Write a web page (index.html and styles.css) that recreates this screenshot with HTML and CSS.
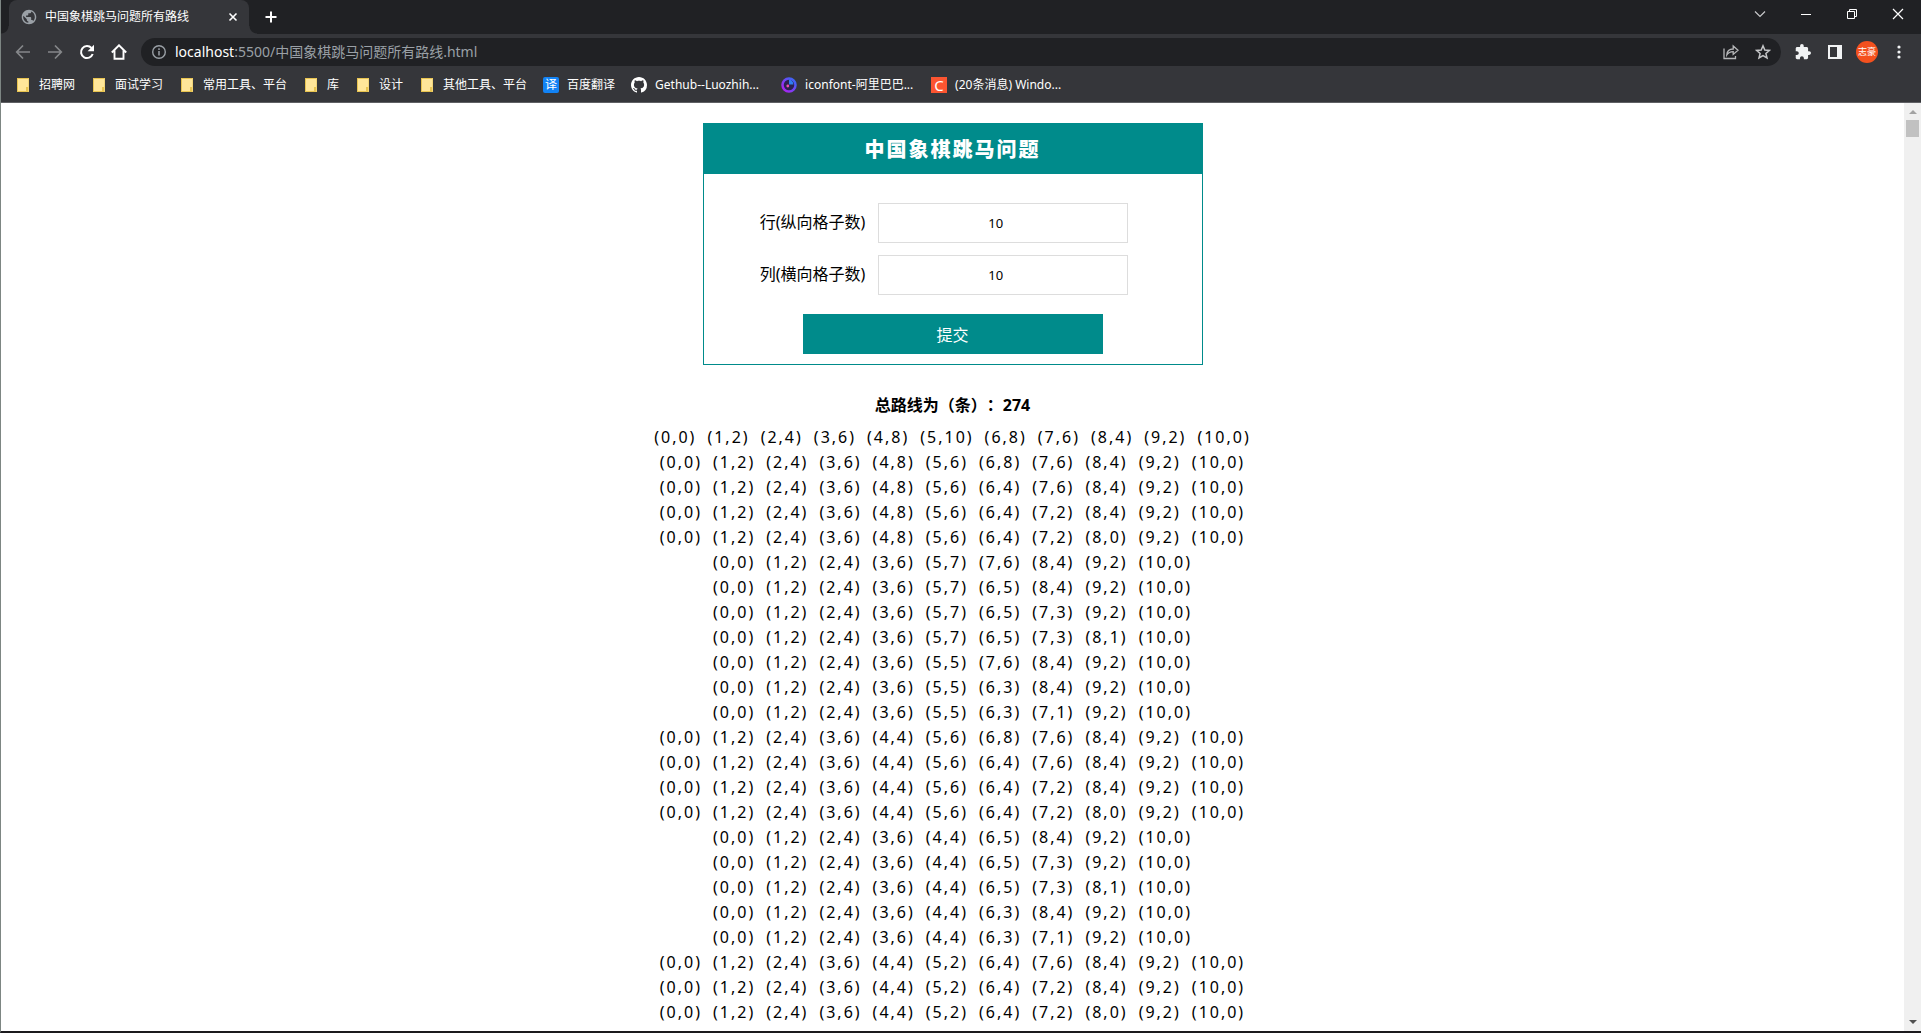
FILE: index.html
```html
<!DOCTYPE html>
<html lang="zh-CN">
<head>
<meta charset="utf-8">
<title>中国象棋跳马问题所有路线</title>
<link rel="stylesheet" href="styles.css">
</head>
<body>
<div class="window">
  <header class="chrome">
    <div class="tab-strip">
      <div class="tab">
        <svg width="16" height="16" viewBox="1 1 22 22"><path fill="#9aa0a6" d="M12 2C6.480 2 2 6.480 2 12s4.480 10 10 10 10-4.480 10-10S17.520 2 12 2zm-1 17.930c-3.950-.49-7-3.850-7-7.930 0-.62.08-1.210.21-1.790L9 15v1c0 1.100.9 2 2 2v1.930zm6.900-2.540c-.26-.81-1-1.390-1.900-1.390h-1v-3c0-.55-.45-1-1-1H8v-2h2c.55 0 1-.45 1-1V7h2c1.100 0 2-.9 2-2v-.41c2.930 1.190 5 4.060 5 7.410 0 2.080-.8 3.970-2.100 5.390z"/></svg>
        <span class="tab-title">中国象棋跳马问题所有路线</span>
        <button class="icon-button" aria-label="关闭标签页"><svg width="16" height="16" viewBox="0 0 16 16"><path d="M4.500 4.500l7 7M11.500 4.500l-7 7" stroke="#fff" stroke-width="1.600"/></svg></button>
      </div>
      <button class="icon-button new-tab" aria-label="新标签页"><svg width="16" height="16" viewBox="0 0 16 16"><path d="M8 2.500v11M2.500 8h11" stroke="#fff" stroke-width="2"/></svg></button>
      <div class="window-controls">
        <button aria-label="搜索标签页"><svg width="12" height="12" viewBox="0 0 12 12"><path d="M1 3.500l5 5 5-5" fill="none" stroke="#c8c9cb" stroke-width="1.200"/></svg></button>
        <button aria-label="最小化"><svg width="12" height="12" viewBox="0 0 12 12"><path d="M1 6.500h10" stroke="#fff"/></svg></button>
        <button aria-label="还原"><svg width="12" height="12" viewBox="0 0 12 12"><path d="M1.500 3.500h7v7h-7zM3.500 3V1.500h7v7H9" fill="none" stroke="#fff"/></svg></button>
        <button aria-label="关闭"><svg width="12" height="12" viewBox="0 0 12 12"><path d="M1 1l10 10M11 1L1 11" stroke="#fff" stroke-width="1.200"/></svg></button>
      </div>
    </div>
    <div class="toolbar">
      <button class="icon-button" aria-label="后退"><svg width="16" height="16" viewBox="0 0 16 16"><path d="M15 8H2M8 1.500L1.700 8 8 14.500" fill="none" stroke="#85878a" stroke-width="1.700"/></svg></button>
      <button class="icon-button" aria-label="前进"><svg width="16" height="16" viewBox="0 0 16 16"><path d="M1 8h13M8 1.500L14.300 8 8 14.500" fill="none" stroke="#85878a" stroke-width="1.700"/></svg></button>
      <button class="icon-button" aria-label="重新加载"><svg width="16" height="16" viewBox="0 0 16 16"><path d="M13.700 10A6 6 0 1 1 12.500 4" fill="none" stroke="#fff" stroke-width="2"/><path d="M15 .8v6.400H8.600z" fill="#fff"/></svg></button>
      <button class="icon-button" aria-label="主页"><svg width="16" height="16" viewBox="0 0 16 16"><path d="M.8 8.500L8 1.300l7.200 7.200M3.500 6.500v8.300h9V6.500" fill="none" stroke="#fff" stroke-width="1.900"/></svg></button>
      <div class="omnibox">
        <svg width="16" height="16" viewBox="0 0 16 16"><circle cx="8" cy="8" r="6.300" fill="none" stroke="#9aa0a6" stroke-width="1.400"/><path d="M8 7v4.500M8 4.300v1.600" stroke="#9aa0a6" stroke-width="1.500"/></svg>
        <div class="url"><span class="host">localhost</span>:5500/中国象棋跳马问题所有路线.html</div>
        <button class="icon-button" aria-label="分享"><svg width="16" height="16" viewBox="0 0 16 16"><path d="M1 4.500V14.500h11.500V12" fill="none" stroke="#b5b6b8" stroke-width="1.300"/><path d="M3.800 11c.2-4 2.500-6 6.400-6V2l4.800 4.200-4.800 4.200V7.700C7.200 7.700 5.300 8.600 3.800 11z" fill="none" stroke="#b5b6b8" stroke-width="1.300"/></svg></button>
        <button class="icon-button" aria-label="添加书签"><svg width="16" height="16" viewBox="0 0 16 16"><path d="M8 1.800l1.800 4.200 4.600.4-3.500 3 1.100 4.500L8 11.500l-4 2.400 1.100-4.500-3.500-3L6.200 6z" fill="none" stroke="#c4c5c7" stroke-width="1.500"/></svg></button>
      </div>
      <div class="actions">
        <button class="icon-button" aria-label="扩展程序"><svg width="16" height="16" viewBox="1 1 22 22"><path fill="#f1f3f4" d="M20.500 11H19V7c0-1.100-.9-2-2-2h-4V3.500a2.500 2.500 0 0 0-5 0V5H4c-1.100 0-1.990.9-1.990 2v3.800H3.500c1.490 0 2.700 1.210 2.700 2.700s-1.210 2.700-2.700 2.700H2V20c0 1.100.9 2 2 2h3.800v-1.500c0-1.490 1.210-2.700 2.700-2.700s2.700 1.210 2.700 2.700V22H17c1.100 0 2-.9 2-2v-4h1.500a2.500 2.500 0 0 0 0-5z"/></svg></button>
        <button class="icon-button" aria-label="侧边栏"><svg width="16" height="16" viewBox="0 0 16 16"><path fill-rule="evenodd" d="M1 1h14v14H1zM3 3v10h7V3z" fill="#f1f3f4"/></svg></button>
        <button class="avatar" aria-label="个人资料">志豪</button>
        <button class="icon-button" aria-label="菜单"><svg width="16" height="16" viewBox="0 0 16 16"><g fill="#f1f3f4"><circle cx="8" cy="3" r="1.600"/><circle cx="8" cy="8" r="1.600"/><circle cx="8" cy="13" r="1.600"/></g></svg></button>
      </div>
    </div>
    <nav class="bookmarks">
      <a href="#"><i class="folder"></i>招聘网</a>
      <a href="#"><i class="folder"></i>面试学习</a>
      <a href="#"><i class="folder"></i>常用工具、平台</a>
      <a href="#"><i class="folder"></i>库</a>
      <a href="#"><i class="folder"></i>设计</a>
      <a href="#"><i class="folder"></i>其他工具、平台</a>
      <a href="#"><span class="badge translate">译</span>百度翻译</a>
      <a class="site" href="#"><svg width="16" height="16" viewBox="0 0 16 16"><path fill="#fff" d="M8 0C3.580 0 0 3.580 0 8c0 3.540 2.290 6.530 5.470 7.590.4.070.55-.17.55-.38 0-.19-.01-.82-.01-1.490-2.010.37-2.530-.49-2.690-.94-.09-.23-.48-.94-.82-1.130-.28-.15-.68-.52-.01-.53.63-.01 1.080.58 1.230.82.72 1.210 1.870.87 2.330.66.07-.52.28-.87.51-1.070-1.780-.2-3.640-.89-3.640-3.950 0-.87.31-1.590.82-2.150-.08-.2-.36-1.020.08-2.120 0 0 .67-.21 2.200.82.64-.18 1.320-.27 2-.27s1.360.09 2 .27c1.530-1.040 2.200-.82 2.200-.82.44 1.100.16 1.920.08 2.120.51.56.82 1.270.82 2.150 0 3.070-1.870 3.750-3.650 3.950.29.25.54.73.54 1.480 0 1.070-.01 1.930-.01 2.200 0 .21.15.46.55.38A8.010 8.010 0 0 0 16 8c0-4.420-3.580-8-8-8z"/></svg>Gethub--Luozhih...</a>
      <a class="site" href="#"><svg width="16" height="16" viewBox="0 0 16 16"><defs><linearGradient id="ring" x1="0" y1="1" x2="1" y2="0"><stop offset="0" stop-color="#b51cf0"/><stop offset="1" stop-color="#2f6df6"/></linearGradient></defs><circle cx="8" cy="8" r="6.500" fill="#2b2250" stroke="url(#ring)" stroke-width="2.500"/><path d="M8 7.500V2.500a5.500 5.500 0 0 1 4.500 5z" fill="#2f7df0"/><circle cx="6.800" cy="9" r="1.400" fill="#f04fb0"/></svg>iconfont-阿里巴巴...</a>
      <a class="site" href="#"><span class="badge csdn">C</span>(20条消息) Windo...</a>
    </nav>
  </header>
  <div class="viewport">
    <main class="page">
      <form class="card">
        <h1>中国象棋跳马问题</h1>
        <div class="fields">
          <div class="field"><label for="rows">行(纵向格子数)</label><input id="rows" type="number" value="10"></div>
          <div class="field"><label for="cols">列(横向格子数)</label><input id="cols" type="number" value="10"></div>
          <button class="submit" type="button">提交</button>
        </div>
      </form>
      <h2>总路线为（条）：274</h2>
      <ol class="routes" id="routes"></ol>
    </main>
    <div class="scrollbar">
      <i class="arrow up"></i>
      <i class="thumb"></i>
      <i class="arrow down"></i>
    </div>
  </div>
</div>
<script src="routes.js"></script>
</body>
</html>
```
FILE: routes.js
```js
const routes = [
  "0,0 1,2 2,4 3,6 4,8 5,10 6,8 7,6 8,4 9,2 10,0",
  "0,0 1,2 2,4 3,6 4,8 5,6 6,8 7,6 8,4 9,2 10,0",
  "0,0 1,2 2,4 3,6 4,8 5,6 6,4 7,6 8,4 9,2 10,0",
  "0,0 1,2 2,4 3,6 4,8 5,6 6,4 7,2 8,4 9,2 10,0",
  "0,0 1,2 2,4 3,6 4,8 5,6 6,4 7,2 8,0 9,2 10,0",
  "0,0 1,2 2,4 3,6 5,7 7,6 8,4 9,2 10,0",
  "0,0 1,2 2,4 3,6 5,7 6,5 8,4 9,2 10,0",
  "0,0 1,2 2,4 3,6 5,7 6,5 7,3 9,2 10,0",
  "0,0 1,2 2,4 3,6 5,7 6,5 7,3 8,1 10,0",
  "0,0 1,2 2,4 3,6 5,5 7,6 8,4 9,2 10,0",
  "0,0 1,2 2,4 3,6 5,5 6,3 8,4 9,2 10,0",
  "0,0 1,2 2,4 3,6 5,5 6,3 7,1 9,2 10,0",
  "0,0 1,2 2,4 3,6 4,4 5,6 6,8 7,6 8,4 9,2 10,0",
  "0,0 1,2 2,4 3,6 4,4 5,6 6,4 7,6 8,4 9,2 10,0",
  "0,0 1,2 2,4 3,6 4,4 5,6 6,4 7,2 8,4 9,2 10,0",
  "0,0 1,2 2,4 3,6 4,4 5,6 6,4 7,2 8,0 9,2 10,0",
  "0,0 1,2 2,4 3,6 4,4 6,5 8,4 9,2 10,0",
  "0,0 1,2 2,4 3,6 4,4 6,5 7,3 9,2 10,0",
  "0,0 1,2 2,4 3,6 4,4 6,5 7,3 8,1 10,0",
  "0,0 1,2 2,4 3,6 4,4 6,3 8,4 9,2 10,0",
  "0,0 1,2 2,4 3,6 4,4 6,3 7,1 9,2 10,0",
  "0,0 1,2 2,4 3,6 4,4 5,2 6,4 7,6 8,4 9,2 10,0",
  "0,0 1,2 2,4 3,6 4,4 5,2 6,4 7,2 8,4 9,2 10,0",
  "0,0 1,2 2,4 3,6 4,4 5,2 6,4 7,2 8,0 9,2 10,0"
];

const list = document.getElementById("routes");
for (const route of routes) {
  const item = document.createElement("li");
  for (const point of route.split(" ")) {
    const step = document.createElement("span");
    step.textContent = `(${point})`;
    item.append(step);
  }
  list.append(item);
}
```
FILE: styles.css
```css
* {
  box-sizing: border-box;
}

body {
  margin: 0;
  font-family: "Noto Sans", "Noto Sans CJK SC", sans-serif;
  font-size: 16px;
  color: #000;
}

button {
  padding: 0;
  border: 0;
  background: none;
  color: inherit;
  font-family: inherit;
}

svg {
  display: block;
  flex: none;
}

.window {
  display: flex;
  flex-direction: column;
  height: 100vh;
  border-left: 1px solid #7d8683;
  border-bottom: 2px solid #1b1a1d;
  overflow: hidden;
}

/* Browser chrome */
.chrome {
  flex: none;
  background: #35363a;
  border-bottom: 1px solid #5f6064;
  color: #fff;
}

.tab-strip {
  display: flex;
  align-items: stretch;
  height: 34px;
  background: #202124;
}

/* Flared feet on both sides of the active tab */
.tab-strip::before,
.tab::after {
  content: "";
  align-self: flex-end;
  flex: none;
  width: 8px;
  height: 8px;
}

.tab-strip::before {
  background: radial-gradient(circle at 0 0, #202124 7px, #35363a 8px);
}

.tab::after {
  margin-right: -16px;
  margin-left: 8px;
  background: radial-gradient(circle at 100% 0, #202124 7px, #35363a 8px);
}

.tab {
  display: flex;
  align-items: center;
  width: 240px;
  padding: 0 8px 0 12px;
  border-radius: 8px 8px 0 0;
  background: #35363a;
}

.tab-title {
  flex: 1;
  margin-left: 8px;
  font-size: 12px;
  line-height: 16px;
  white-space: nowrap;
}

.icon-button {
  width: 16px;
  height: 16px;
}

.new-tab {
  align-self: center;
  margin-left: 14px;
}

.window-controls {
  display: flex;
  height: 28px;
  margin-left: auto;
}

.window-controls button {
  display: grid;
  place-items: center;
  width: 46px;
}

.toolbar {
  display: flex;
  align-items: center;
  gap: 16px;
  height: 36px;
  padding: 0 14px;
}

.omnibox {
  display: flex;
  flex: 1;
  align-items: center;
  gap: 16px;
  height: 28px;
  margin-left: -2px;
  padding: 0 10px;
  border-radius: 14px;
  background: #202124;
}

.url {
  flex: 1;
  margin-left: -8px;
  color: #9aa0a6;
  font-size: 14px;
  line-height: 20px;
  white-space: nowrap;
}

.host {
  color: #fff;
}

.actions {
  display: flex;
  align-items: center;
  gap: 13px;
  margin-left: -2px;
}

.actions .icon-button:first-child {
  margin-right: 3px;
}

.avatar {
  width: 22px;
  height: 22px;
  border-radius: 50%;
  background: #f4511e;
  color: #fff;
  font-size: 9px;
  line-height: 22px;
  white-space: nowrap;
}

.bookmarks {
  display: flex;
  align-items: center;
  gap: 16px;
  height: 32px;
  padding: 0 14px 2px;
}

.bookmarks a {
  display: flex;
  align-items: center;
  gap: 8px;
  color: #fff;
  font-size: 12px;
  line-height: 16px;
  text-decoration: none;
  white-space: nowrap;
}

.bookmarks .site {
  width: 134px;
}

.folder {
  width: 12px;
  height: 14px;
  margin: 0 2px;
  border: 1px solid #e8c450;
  border-right-color: #f3d578;
  background: linear-gradient(#e8c450, #e8c450) right bottom / 2px 4px no-repeat #ffe699;
}

.badge {
  width: 16px;
  height: 16px;
  text-align: center;
}

.translate {
  border-radius: 2px;
  background: #1283f5;
}

.csdn {
  background: #fc5531;
  font-size: 15px;
}

/* Page */
.viewport {
  display: flex;
  flex: 1;
  min-height: 0;
  background: #fff;
}

.page {
  flex: 1;
  padding-top: 20px;
  overflow: hidden;
}

.card {
  width: 500px;
  margin: 0 auto;
  border: 1px solid #008b8b;
}

h1 {
  margin: 0;
  padding-top: 2px;
  background: #008b8b;
  color: #fff;
  font-size: 20px;
  font-weight: 900;
  line-height: 48px;
  letter-spacing: 2px;
  text-align: center;
}

.fields {
  display: flex;
  flex-direction: column;
  align-items: center;
  gap: 12px;
  padding: 29px 0 10px;
}

.field {
  display: flex;
  align-items: center;
  gap: 13px;
  margin-right: 17px;
}

.field label {
  padding-bottom: 2px;
  line-height: 38px;
}

.field input {
  width: 250px;
  height: 40px;
  padding: 0;
  border: 1px solid #ddd;
  outline: 0;
  font-family: inherit;
  font-size: 13px;
  text-align: center;
}

.submit {
  width: 300px;
  height: 40px;
  margin-top: 7px;
  background: #008b8b;
  color: #fff;
  font-size: 16px;
}

h2 {
  margin: 28px 0 8px;
  font-size: 16px;
  line-height: 24px;
  text-align: center;
  text-spacing-trim: space-all;
}

.routes {
  margin: 0;
  padding: 0;
  list-style: none;
}

.routes li {
  display: flex;
  justify-content: center;
  gap: 11px;
  line-height: 25px;
  letter-spacing: 2px;
}

.scrollbar {
  display: flex;
  flex-direction: column;
  align-items: center;
  width: 17px;
  padding: 7px 0;
  background: #f0f0f0;
}

.arrow {
  border: solid transparent;
  border-width: 0 4px;
}

.up {
  border-bottom: 4px solid #a3a3a3;
}

.down {
  margin-top: auto;
  border-top: 4px solid #505050;
}

.thumb {
  width: 13px;
  height: 17px;
  margin-top: 6px;
  background: #c1c1c1;
}
```
